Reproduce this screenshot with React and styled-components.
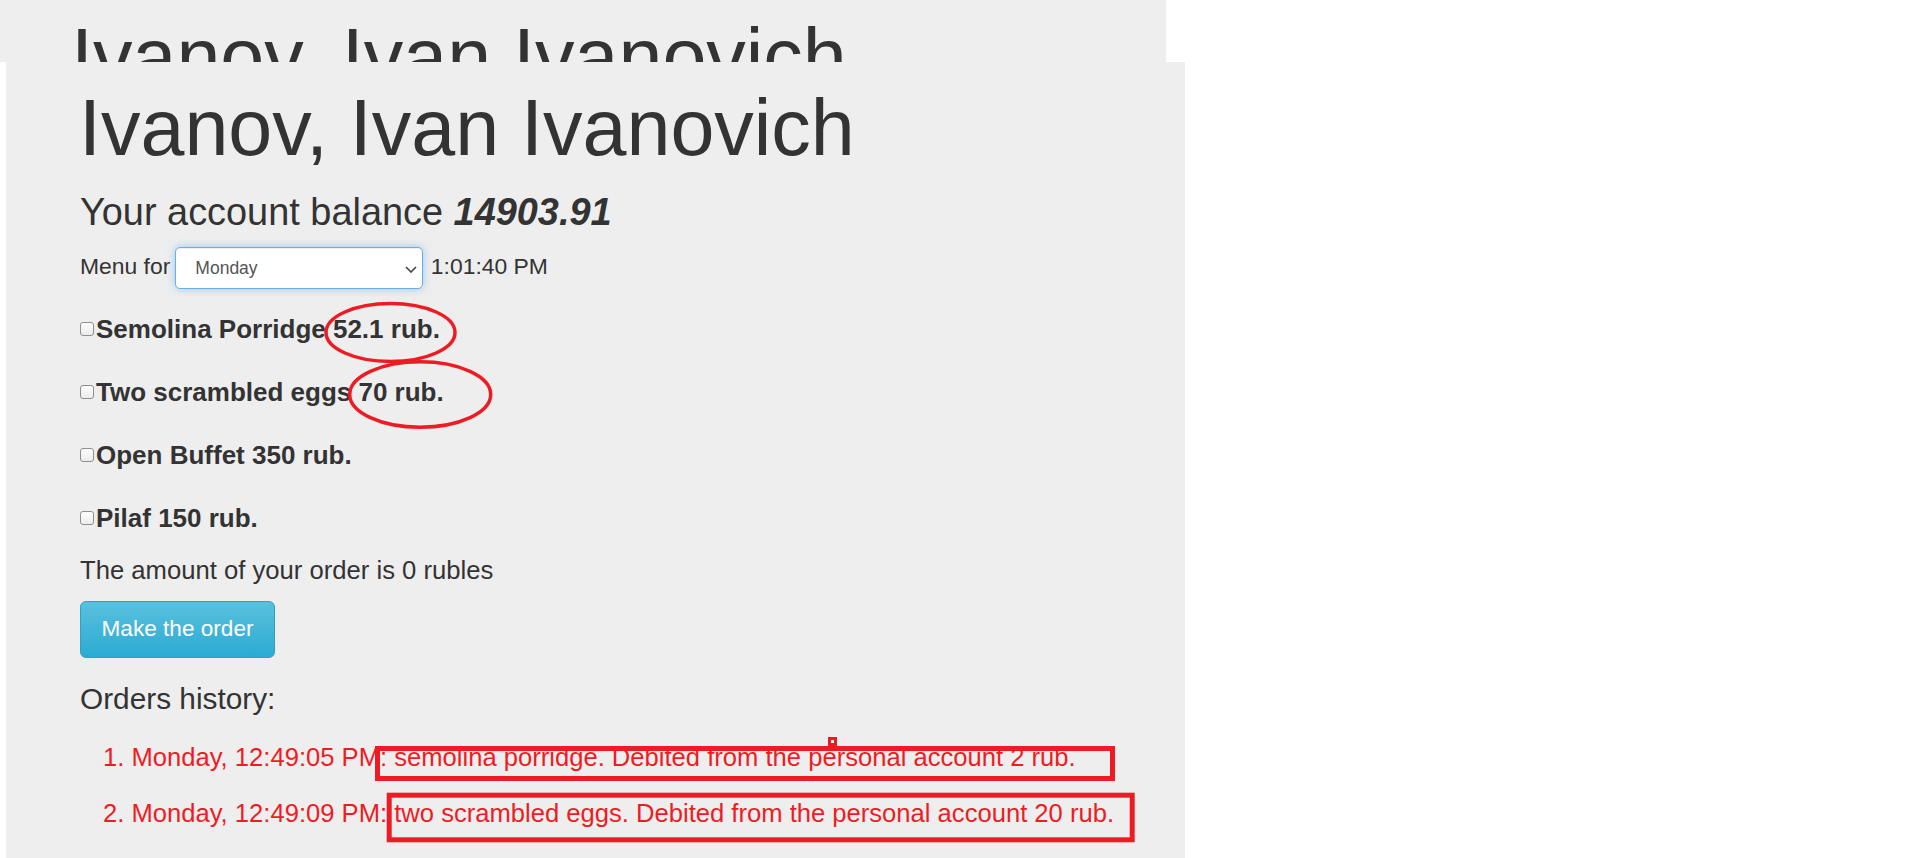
import React from "react";
import styled, { createGlobalStyle } from "styled-components";

const Global = createGlobalStyle`
  html, body { margin: 0; padding: 0; background: #ffffff; }
  body { font-family: "Liberation Sans", Arial, sans-serif; color: #333333; }
`;

const Page = styled.div`
  display: flex;
  flex-direction: column;
  align-items: flex-start;
  width: 1914px;
  height: 858px;
  overflow: hidden;
`;

const Strip = styled.div`
  width: 1166px;
  height: 62px;
  background: #eeeeee;
  overflow: hidden;
  padding: 12.7px 0 0 71px;
  box-sizing: border-box;
  flex: none;
`;

const Panel = styled.div`
  position: relative;
  margin-left: 6px;
  width: 1179px;
  height: 796px;
  background: #eeeeee;
  box-sizing: border-box;
  padding: 22px 0 0 74px;
  flex: none;
`;

const Name = styled.h1`
  margin: 0 0 0 ${(p) => p.$shift || 0}px;
  font-size: 79px;
  line-height: 87px;
  font-weight: 400;
  color: #333;
  white-space: nowrap;
`;

const Balance = styled.h3`
  margin: 20.5px 0 0 0;
  font-size: 37.9px;
  line-height: 41px;
  font-weight: 400;
  color: #333;
  white-space: nowrap;
  b {
    font-weight: 700;
    font-style: italic;
  }
`;

const MenuRow = styled.div`
  display: flex;
  align-items: flex-start;
  margin-top: 14.5px;
  height: 42px;
`;

const RowText = styled.span`
  font-size: 22.9px;
  line-height: 38px;
  margin-right: ${(p) => p.$gap || 0}px;
  margin-left: ${(p) => p.$lead || 0}px;
  white-space: nowrap;
`;

const SelectWrap = styled.div`
  position: relative;
  width: 248px;
  height: 42px;
`;

const DaySelect = styled.select`
  appearance: none;
  -webkit-appearance: none;
  width: 100%;
  height: 100%;
  box-sizing: border-box;
  margin: 0;
  padding: 0 30px 0 19px;
  font-family: "Liberation Sans", Arial, sans-serif;
  font-size: 17.5px;
  color: #555555;
  background: #ffffff;
  border: 1px solid #66afe9;
  border-radius: 5px;
  outline: none;
  box-shadow: inset 0 1px 1px rgba(0, 0, 0, 0.075), 0 0 8px rgba(102, 175, 233, 0.6);
`;

const Chevron = styled.svg`
  position: absolute;
  right: 6px;
  top: 19px;
  width: 12px;
  height: 7px;
  pointer-events: none;
`;

const Items = styled.div`
  display: flex;
  flex-direction: column;
  gap: 26.8px;
  margin-top: 22.3px;
`;

const Item = styled.label`
  display: flex;
  align-items: center;
  height: 36px;
  font-size: 26px;
  line-height: 36px;
  font-weight: 700;
  color: #333;
  white-space: nowrap;
`;

const Box = styled.span`
  display: inline-block;
  width: 12px;
  height: 12px;
  border: 1px solid #8f8f8f;
  border-radius: 3px;
  background: linear-gradient(#fdfdfd, #ececec);
  margin-right: 2px;
  flex: none;
`;

const Amount = styled.p`
  margin: 16.2px 0 0 0;
  font-size: 25.65px;
  line-height: 36px;
  white-space: nowrap;
`;

const OrderButton = styled.button`
  margin-top: 12.8px;
  width: 195px;
  height: 57px;
  box-sizing: border-box;
  padding: 0;
  border: 1px solid #28a4c9;
  border-radius: 6px;
  background: linear-gradient(to bottom, #5bc0de 0%, #2aabd2 100%);
  color: #ffffff;
  font-family: "Liberation Sans", Arial, sans-serif;
  font-size: 22.6px;
  display: flex;
  align-items: center;
  justify-content: center;
`;

const HistoryTitle = styled.h4`
  margin: 23.6px 0 0 0;
  font-size: 29.8px;
  line-height: 36px;
  font-weight: 400;
  color: #333;
`;

const History = styled.ol`
  margin: 11.4px 0 0 0;
  padding: 0 0 0 23px;
  list-style-position: inside;
  color: #ee1c24;
  font-size: 25.6px;
  line-height: 56px;
`;

const Entry = styled.li`
  white-space: nowrap;
`;

const Marks = styled.svg`
  position: absolute;
  left: 0;
  top: 0;
  width: 1179px;
  height: 796px;
  pointer-events: none;
`;

const menu = [
  "Semolina Porridge 52.1 rub.",
  "Two scrambled eggs 70 rub.",
  "Open Buffet 350 rub.",
  "Pilaf 150 rub.",
];

const orders = [
  "Monday, 12:49:05 PM: semolina porridge. Debited from the personal account 2 rub.",
  "Monday, 12:49:09 PM: two scrambled eggs. Debited from the personal account 20 rub.",
];

export default function App() {
  const red = "#ed1c24";
  return (
    <>
      <Global />
      <Page>
        <Strip>
          <Name>Ivanov, Ivan Ivanovich</Name>
        </Strip>
        <Panel>
          <Name $shift={-1}>Ivanov, Ivan Ivanovich</Name>
          <Balance>
            Your account balance <b>14903.91</b>
          </Balance>
          <MenuRow>
            <RowText $gap={5}>Menu for</RowText>
            <SelectWrap>
              <DaySelect defaultValue="Monday">
                <option>Monday</option>
                <option>Tuesday</option>
                <option>Wednesday</option>
                <option>Thursday</option>
                <option>Friday</option>
              </DaySelect>
              <Chevron viewBox="0 0 12 7">
                <path d="M1 1 L6 6 L11 1" fill="none" stroke="#444" strokeWidth="1.6" />
              </Chevron>
            </SelectWrap>
            <RowText $lead={7.5}>1:01:40 PM</RowText>
          </MenuRow>
          <Items>
            {menu.map((m) => (
              <Item key={m}>
                <Box />
                {m}
              </Item>
            ))}
          </Items>
          <Amount>The amount of your order is 0 rubles</Amount>
          <OrderButton>Make the order</OrderButton>
          <HistoryTitle>Orders history:</HistoryTitle>
          <History>
            {orders.map((o) => (
              <Entry key={o}>{o}</Entry>
            ))}
          </History>
          <Marks viewBox="0 0 1179 796">
            <ellipse cx="384.5" cy="270.5" rx="64.5" ry="29" fill="none" stroke={red} strokeWidth="3.5" />
            <ellipse cx="414.2" cy="332.5" rx="70.5" ry="32.7" fill="none" stroke={red} strokeWidth="3.5" />
            <rect x="371.5" y="686.5" width="735" height="30" fill="none" stroke={red} strokeWidth="5" />
            <rect x="383.2" y="733.2" width="743" height="44.6" fill="none" stroke={red} strokeWidth="5" />
            <rect x="822" y="675" width="9" height="9" fill={red} />
            <rect x="825" y="678" width="3" height="3" fill="#ffffff" />
          </Marks>
        </Panel>
      </Page>
    </>
  );
}
